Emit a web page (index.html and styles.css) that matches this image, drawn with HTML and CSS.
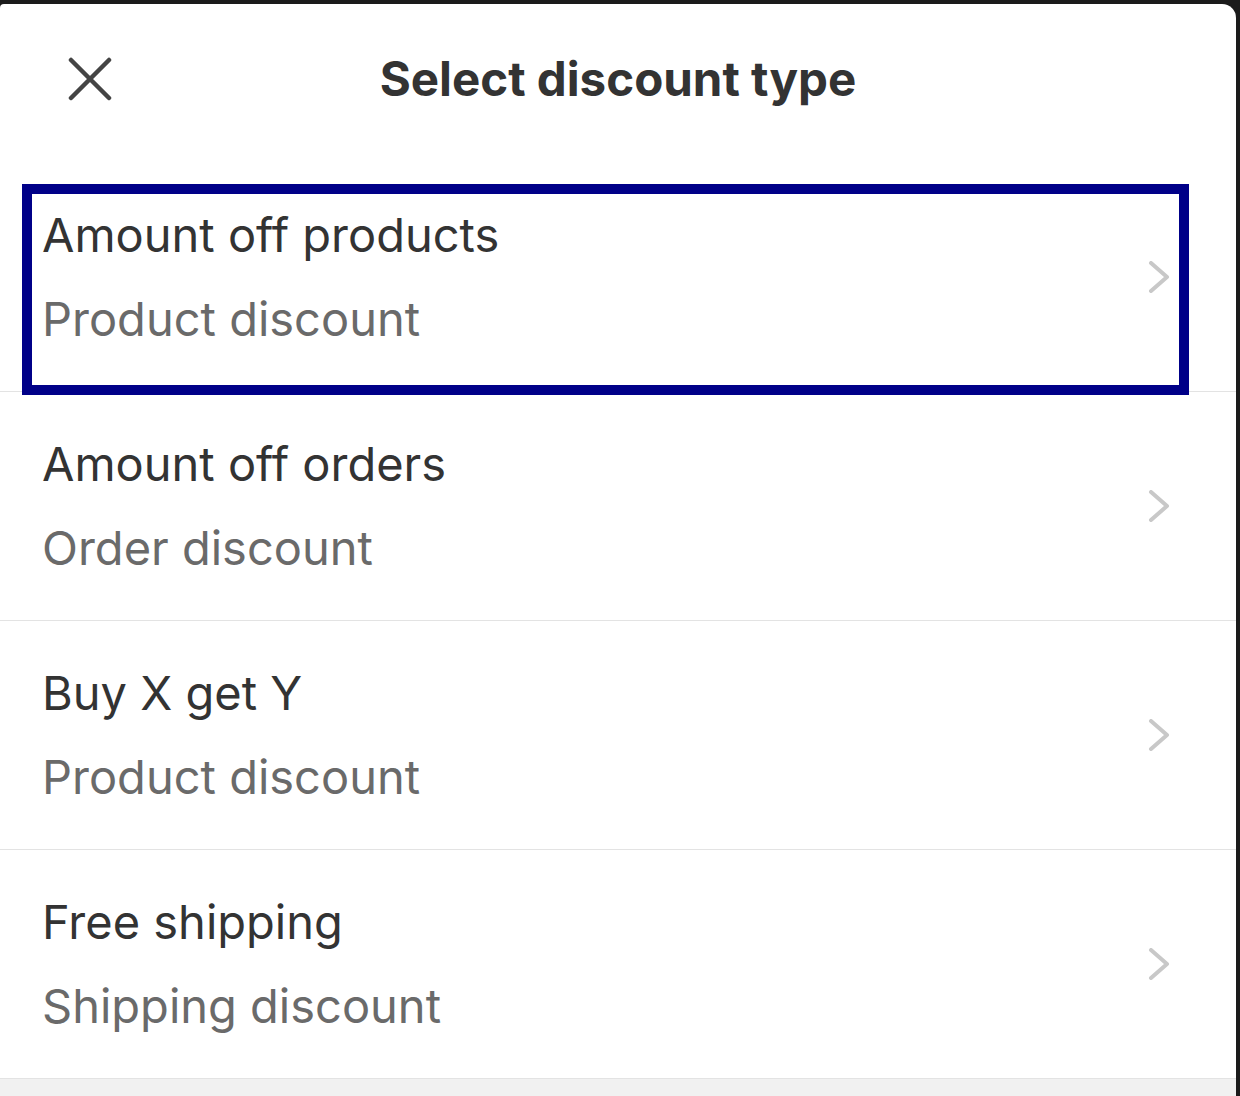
FILE: index.html
```html
<!DOCTYPE html>
<html lang="en">

<head>
    <meta charset="UTF-8">
    <meta name="viewport" content="width=device-width, initial-scale=1.0">
    <title>Select discount type</title>
    <link rel="stylesheet" href="styles.css">
</head>

<body>

    <div class="sheet">
        <div class="sheet-header">
            <button class="close-btn" aria-label="Close">
                <svg width="44" height="44" viewBox="0 0 44 44">
                    <path d="M3 3 L41 41 M41 3 L3 41" stroke="#444" stroke-width="4.5" stroke-linecap="round" fill="none" />
                </svg>
            </button>
            <h1 class="sheet-title">Select discount type</h1>
            <span></span>
        </div>

        <ul class="type-list">
            <li class="type-item">
                <div class="type-text">
                    <div class="type-name">Amount off products</div>
                    <div class="type-kind">Product discount</div>
                </div>
                <svg class="chevron" width="22" height="32" viewBox="0 0 22 32">
                    <path d="M3 2 L19 16 L3 30" />
                </svg>
                <div class="focus-ring"></div>
            </li>
            <li class="type-item">
                <div class="type-text">
                    <div class="type-name">Amount off orders</div>
                    <div class="type-kind">Order discount</div>
                </div>
                <svg class="chevron" width="22" height="32" viewBox="0 0 22 32">
                    <path d="M3 2 L19 16 L3 30" />
                </svg>
            </li>
            <li class="type-item">
                <div class="type-text">
                    <div class="type-name">Buy X get Y</div>
                    <div class="type-kind">Product discount</div>
                </div>
                <svg class="chevron" width="22" height="32" viewBox="0 0 22 32">
                    <path d="M3 2 L19 16 L3 30" />
                </svg>
            </li>
            <li class="type-item">
                <div class="type-text">
                    <div class="type-name">Free shipping</div>
                    <div class="type-kind">Shipping discount</div>
                </div>
                <svg class="chevron" width="22" height="32" viewBox="0 0 22 32">
                    <path d="M3 2 L19 16 L3 30" />
                </svg>
            </li>
        </ul>

        <div class="sheet-footer"></div>
    </div>

</body>

</html>
```

FILE: styles.css
```css
body {
    margin: 0;
    background-color: #1b1b1b;
    font-family: Inter, "Noto Sans", sans-serif;
    color: #333;
    height: 1096px;
    overflow: hidden;
}

.sheet {
    margin: 4px 4px 0 0;
    background-color: #fff;
    border-radius: 4px 14px 0 0;
}

.sheet-header {
    display: grid;
    grid-template-columns: 1fr auto 1fr;
    align-items: start;
    height: 159px;
    padding-top: 45px;
    box-sizing: border-box;
}

.close-btn {
    justify-self: start;
    display: flex;
    align-items: center;
    justify-content: center;
    width: 60px;
    height: 60px;
    margin-left: 60px;
    padding: 0;
    border: none;
    background: none;
    cursor: pointer;
}

.sheet-title {
    margin: 0;
    font-size: 47.5px;
    line-height: 60px;
    font-weight: 700;
    color: #333;
}

.type-list {
    list-style: none;
    margin: 0;
    padding: 0;
}

.type-item {
    position: relative;
    display: flex;
    align-items: center;
    justify-content: space-between;
    height: 229px;
    padding: 0 66px 0 42px;
    box-sizing: border-box;
    border-bottom: 1px solid #e3e3e3;
}

.type-name,
.type-kind {
    font-size: 47px;
    line-height: 84px;
}

.type-name {
    color: #333;
}

.type-kind {
    color: #6a6a6a;
}

.chevron path {
    fill: none;
    stroke: #c8c8c8;
    stroke-width: 4;
    stroke-linecap: round;
    stroke-linejoin: round;
}

.focus-ring {
    position: absolute;
    top: 21px;
    left: 22px;
    width: 1167px;
    height: 211px;
    border: 10px solid #000088;
    box-sizing: border-box;
    pointer-events: none;
}

.sheet-footer {
    height: 18px;
    background-color: #f1f1f1;
}
```
